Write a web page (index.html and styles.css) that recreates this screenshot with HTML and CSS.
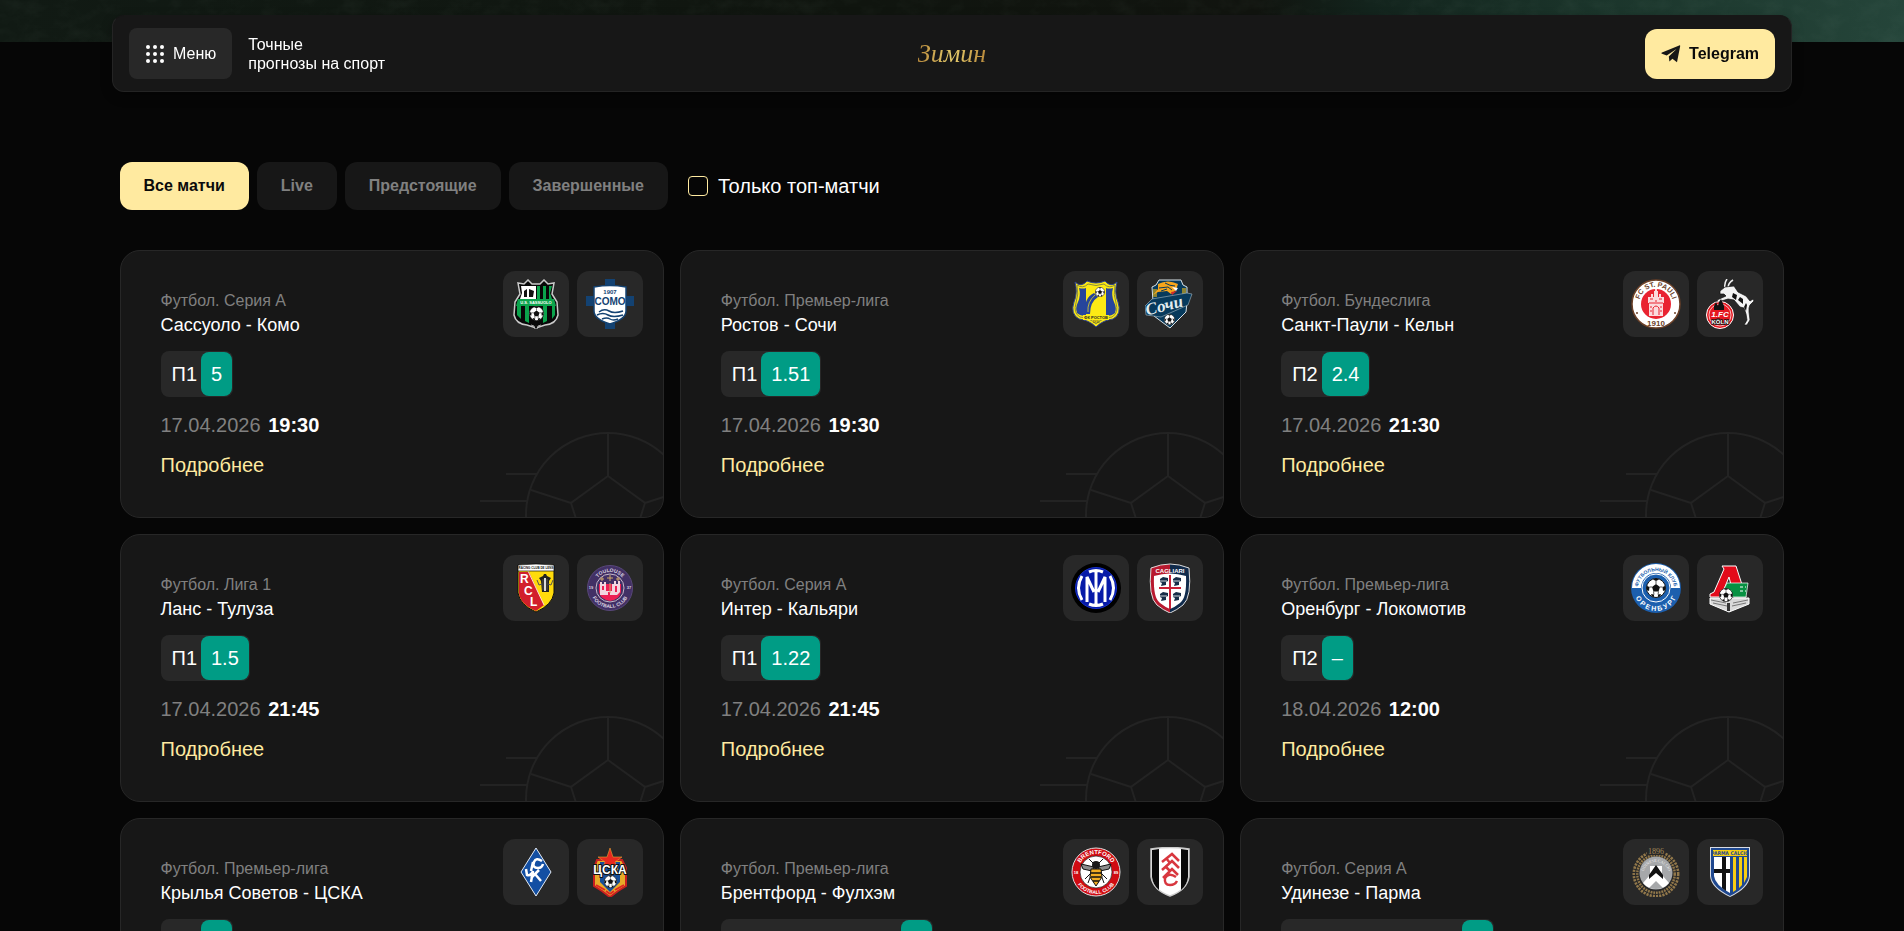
FILE: index.html
```html
<!DOCTYPE html>
<html lang="ru">
<head>
    <meta charset="UTF-8">
    <meta name="viewport" content="width=device-width, initial-scale=1.0">
    <title>Зимин - точные прогнозы на спорт</title>
    <link rel="stylesheet" href="styles.css">
</head>
<body>
    <svg class="sprite" aria-hidden="true">
        <symbol id="bg-ball" viewBox="0 0 184 86">
            <g fill="none" stroke="#232323" stroke-width="2">
                <circle cx="128" cy="83" r="82"/>
                <path d="M128 1v43l37 27-14 44h-46L91 71l37-27M91 71L51 58M165 71l40-13M26 42h31M0 69h47"/>
            </g>
        </symbol>
        <symbol id="ball" viewBox="0 0 20 20">
            <circle cx="10" cy="10" r="9.5" fill="#fff" stroke="#111"/>
            <path fill="#111" d="M10 6l4 3-1.500 4.500h-5L6 9zM7 1.500L10 3l3-1.500L10 .5zM1 8l2.500 1L3 13 1 12zM19 8l-2.500 1 .5 4 2-1zM5 16l3 .5 0 2.500-2-.5zM15 16l-3 .5 0 2.500 2-.5z"/>
            <path fill="none" stroke="#111" stroke-width=".7" d="M10 3v3M3.500 9H6M16.500 9H14M8 16.500l-.5-3M12 16.500l.5-3"/>
        </symbol>
    </svg>

    <div class="hero">
        <svg class="hero-dust" aria-hidden="true">
            <filter id="dust">
                <feTurbulence type="fractalNoise" baseFrequency=".05 .07" numOctaves="4" seed="8"/>
                <feColorMatrix values="0 0 0 0 .45  0 0 0 0 .6  0 0 0 0 .5  1.200 0 0 0 -.5"/>
            </filter>
            <rect width="100%" height="100%" filter="url(#dust)"/>
        </svg>
    </div>

    <header class="header">
        <button class="menu-btn" type="button">
            <svg width="20" height="20" viewBox="0 0 20 20" fill="#fff" aria-hidden="true">
                <circle cx="3" cy="3" r="2"/><circle cx="10" cy="3" r="2"/><circle cx="17" cy="3" r="2"/>
                <circle cx="3" cy="10" r="2"/><circle cx="10" cy="10" r="2"/><circle cx="17" cy="10" r="2"/>
                <circle cx="3" cy="17" r="2"/><circle cx="10" cy="17" r="2"/><circle cx="17" cy="17" r="2"/>
            </svg>
            Меню
        </button>
        <p class="slogan">Точные<br>прогнозы на спорт</p>
        <a class="logo" href="#">Зимин</a>
        <a class="tg-btn" href="#">
            <svg width="20" height="18" viewBox="0 0 20 18" fill="#171717" aria-hidden="true">
                <path d="M19.200 1L16 17.200l-4.600-3.400-3 2.600-.6-4.800L15.500 4 5.700 10.500 1 8.800c-.8-.4-.8-1 0-1.400L18.200.4c.6-.2 1.100 0 1 .6z"/>
            </svg>
            Telegram
        </a>
    </header>

    <main class="container">
        <div class="filters">
            <button class="filter active" type="button">Все матчи</button>
            <button class="filter" type="button">Live</button>
            <button class="filter" type="button">Предстоящие</button>
            <button class="filter" type="button">Завершенные</button>
            <label class="top-only" for="topOnly">
                <input type="checkbox" id="topOnly">
                Только топ-матчи
            </label>
        </div>

        <div class="matches">
            <article class="match">
                <svg class="match-bg" aria-hidden="true"><use href="#bg-ball"/></svg>
                <div class="teams">
                    <div class="team">
                        <svg viewBox="0 0 50 50">
                            <path d="M7 4l6 1 4-4 4 4h8l4-4 4 4 6-1-2 11 5 8 1 13q-2 9-13 10l-9 3-9-3Q5 45 3 36l1-13 5-8z" fill="#080808" stroke="#c9c9c9" stroke-width="1.500"/>
                            <path d="M10 7h15v13H9l2-6z" fill="#fff"/>
                            <path d="M26 7h3v13h-3zM32 7h3v13h-3zM38 7h3l-2 7 2 6h-3zM6 27h4v13l-4-4zM14 27h4v17l-4-2zM32 27h4v15l-4 2zM41 27h3v9l-3 4z" fill="#0ba44c"/>
                            <path d="M13 18v-6l3-2v8zM18 18v-8l5 2-1 6z" fill="#111"/>
                            <path d="M7 20h36l2 7H5z" fill="#0ba44c"/>
                            <text x="25" y="25" font-size="4" font-weight="bold" fill="#fff" text-anchor="middle">U.S. SASSUOLO</text>
                            <use href="#ball" x="18" y="27" width="15" height="15"/>
                            <path d="M20 46l3 1 1 3 2 0 1-3 3-1" fill="#111" stroke="#ccc" stroke-width=".8"/>
                        </svg>
                    </div>
                    <div class="team">
                        <svg viewBox="0 0 50 50">
                            <path d="M20 0h10v50H20zM1 17h48v10H1z" fill="#134272"/>
                            <path d="M9 8q16-3 32 0v24q0 8-16 13Q9 40 9 32z" fill="#fff" stroke="#134272" stroke-width="1.500"/>
                            <text x="25" y="15" font-size="6" font-weight="bold" fill="#134272" text-anchor="middle">1907</text>
                            <text x="25" y="26" font-size="10" font-weight="bold" fill="#134272" text-anchor="middle">COMO</text>
                            <path d="M14 33q5-4 10-1t14 0M12 36q6-3 11 0t15 0M17 40q5-2 8 0t8 0" fill="none" stroke="#134272" stroke-width="1.500"/>
                        </svg>
                    </div>
                </div>
                <p class="league">Футбол. Серия А</p>
                <h2 class="title">Сассуоло - Комо</h2>
                <div class="bet"><span>П1</span><b>5</b></div>
                <p class="date">17.04.2026 <b>19:30</b></p>
                <a class="more" href="#">Подробнее</a>
            </article>

            <article class="match">
                <svg class="match-bg" aria-hidden="true"><use href="#bg-ball"/></svg>
                <div class="teams">
                    <div class="team">
                        <svg viewBox="0 0 50 50">
                            <path d="M4 3q6 6 12-1 9 4 18 0 6 7 12 1-3 11 1 20 4 12-5 17-10 1-17 8-7-7-17-8-9-5-5-17Q7 14 4 3z" fill="#fdea14" stroke="#2f4592"/>
                            <path d="M6 6q6 4 11-1 8 3 16 0 5 5 11 1-2 10 1 18 3 10-4 14-10 1-16 7-6-6-16-7-7-4-4-14Q8 15 6 6z" fill="none" stroke="#8b8d3c"/>
                            <path d="M8 9q4 1 7 0v28q-6 0-9-3-2-5 1-11 3-7 1-14zM42 9q-4 1-7 0v28q6 0 9-3 2-5-1-11-3-7-1-14z" fill="#27459b"/>
                            <path d="M15 35Q12 19 23 14l4 4q-8 5-8 17z" fill="#27459b"/>
                            <path d="M17 33q-1-10 7-17" fill="none" stroke="#fdea14" stroke-width=".7"/>
                            <use href="#ball" x="24" y="8" width="10" height="10"/>
                            <path d="M12 36h26v5H12z" fill="#fdea14"/>
                            <text x="25" y="40" font-size="4" font-weight="bold" fill="#222" text-anchor="middle">ФК РОСТОВ</text>
                            <text x="25" y="44" font-size="3" fill="#222" text-anchor="middle">1930</text>
                        </svg>
                    </div>
                    <div class="team">
                        <svg viewBox="0 0 50 50">
                            <path d="M7 8l4-2 3-5h22l2 5 4 2v15l-1 10-16 16L9 37z" fill="#073a5c" stroke="#d9e2e6"/>
                            <path d="M8 10h4v8H8zM37 9h4v12h-4z" fill="#8c8433"/>
                            <path d="M13 5q10-5 20 0l-2 6-5 4-4-3-9 1-5 3 5-6z" fill="#f6a51b"/>
                            <path d="M14 9l9-1 4 3M20 4q5 3 10 3M16 12l6-2" fill="none" stroke="#073a5c"/>
                            <path d="M27 8l6 1-2 3z" fill="#fff"/><path d="M26 13l6-1-5 4z" fill="#d42a28"/>
                            <path d="M1 36l-1-9 7-7 35-6 5 1-4 11-27 12z" fill="#073a5c" stroke="#a8bac4" stroke-width=".6"/>
                            <text x="2" y="36" font-size="17" font-style="italic" font-weight="bold" fill="#e2ecef" class="serif" transform="rotate(-14 4 36)">Сочи</text>
                            <use href="#ball" x="19" y="35" width="11" height="11"/>
                        </svg>
                    </div>
                </div>
                <p class="league">Футбол. Премьер-лига</p>
                <h2 class="title">Ростов - Сочи</h2>
                <div class="bet"><span>П1</span><b>1.51</b></div>
                <p class="date">17.04.2026 <b>19:30</b></p>
                <a class="more" href="#">Подробнее</a>
            </article>

            <article class="match">
                <svg class="match-bg" aria-hidden="true"><use href="#bg-ball"/></svg>
                <div class="teams">
                    <div class="team">
                        <svg viewBox="0 0 50 50">
                            <circle cx="25" cy="25" r="24" fill="#fff" stroke="#6c4128" stroke-width="1.500"/>
                            <circle cx="25" cy="25" r="15" fill="#e92331"/>
                            <path id="pauli" d="M8.500 29a17 17 0 1 1 33 0" fill="none"/>
                            <text font-size="7" font-weight="bold" fill="#6c4128" text-anchor="middle"><textPath href="#pauli" startOffset="50%">FC ST. PAULI</textPath></text>
                            <text x="25" y="47" font-size="8" font-weight="bold" fill="#6c4128" text-anchor="middle">1910</text>
                            <path d="M17 18h3v-3h2v3h1v-6h1v-2h2v2h1v6h1v-3h2v3h3v6h-1v13H18V24h-1z" fill="#fbdadd"/>
                            <path d="M22 36v-7q3-4 6 0v7M19 20h3M28 20h3M18 24h14M19 28h2M29 28h2M19 32h2M29 32h2M24 22h2" stroke="#e92331" fill="none"/>
                            <circle cx="6" cy="34" r="1" fill="#6c4128"/><circle cx="44" cy="34" r="1" fill="#6c4128"/>
                        </svg>
                    </div>
                    <div class="team">
                        <svg viewBox="0 0 50 50">
                            <path d="M20 9q-1-5 2-9M23 9q0-5 5-8" fill="none" stroke="#eee" stroke-width="1.500"/>
                            <path d="M20 8l-5 4 0 3 4 0 2 2-9 4 1 2 10-3 6 1 6 7 4 1 2 6 1 6-3 5 3 0 3-5-1-8 0-4 1-3 4-4-1-2-3 2-4-5-8-4-4-6z" fill="#f3f3f3" stroke="#111" stroke-width=".7"/>
                            <path d="M28 14l-1 4 4 3 1-5zM35 18l-2 3 5 4 0-5zM41 24l-2 4 2 4 1-6z" fill="#111"/>
                            <circle cx="15" cy="36" r="13.500" fill="#e51820" stroke="#fff"/>
                            <circle cx="15" cy="36" r="11" fill="none" stroke="#fff" stroke-width=".7"/>
                            <path d="M9 31v-4l2-4 2 4 1-4 2-3 3 7v4z" fill="#111"/>
                            <text x="15" y="38" font-size="8" font-weight="bold" font-style="italic" fill="#fff" text-anchor="middle">1.FC</text>
                            <text x="15" y="45" font-size="6" font-weight="bold" fill="#fff" stroke="#111" stroke-width="1.500" paint-order="stroke" text-anchor="middle">KÖLN</text>
                        </svg>
                    </div>
                </div>
                <p class="league">Футбол. Бундеслига</p>
                <h2 class="title">Санкт-Паули - Кельн</h2>
                <div class="bet"><span>П2</span><b>2.4</b></div>
                <p class="date">17.04.2026 <b>21:30</b></p>
                <a class="more" href="#">Подробнее</a>
            </article>

            <article class="match">
                <svg class="match-bg" aria-hidden="true"><use href="#bg-ball"/></svg>
                <div class="teams">
                    <div class="team">
                        <svg viewBox="0 0 50 50">
                            <path d="M7 2q18-2 36 0v28q-2 12-18 19Q9 42 7 30z" fill="#ffdb0b" stroke="#111"/>
                            <path d="M8 9h10l15 33-8 6Q9 41 8 30z" fill="#d21f2b"/>
                            <path d="M17 8l16 34" stroke="#fff" stroke-width=".8"/>
                            <path d="M7 2q18-2 36 0v6H7z" fill="#fff" stroke="#111" stroke-width=".7"/>
                            <text x="25" y="6" font-size="3" font-weight="bold" fill="#111" text-anchor="middle">RACING CLUB DE LENS</text>
                            <g font-size="12" font-weight="bold" fill="#fff"><text x="9" y="20">R</text><text x="13" y="32">C</text><text x="19" y="43">L</text></g>
                            <path d="M28 15l4-2 1-2 2 0 1 2 4 2-2 3 0 11H31l-1-11z" fill="#222"/>
                            <path d="M32 16v11M36 16v11M26 17l2 5 3-1M42 17l-2 5-3-1" fill="none" stroke="#555"/>
                            <path d="M33 15h2v13h-2z" fill="#ddd"/>
                        </svg>
                    </div>
                    <div class="team">
                        <svg viewBox="0 0 50 50">
                            <circle cx="25" cy="25" r="22.500" fill="#423065" stroke="#59487a"/>
                            <circle cx="25" cy="25" r="14" fill="#423065" stroke="#c5b9ca"/>
                            <path id="tlsTop" d="M9 25a16 16 0 0 1 32 0" fill="none"/>
                            <path id="tlsBot" d="M5 25a20 20 0 0 0 40 0" fill="none"/>
                            <g font-size="5" font-weight="bold" fill="#ddd5e2" text-anchor="middle">
                                <text><textPath href="#tlsTop" startOffset="50%">TOULOUSE</textPath></text>
                                <text><textPath href="#tlsBot" startOffset="50%">FOOTBALL CLUB</textPath></text>
                                <text x="6" y="26" font-size="4">19</text><text x="44" y="26" font-size="4">37</text>
                            </g>
                            <path d="M14 21h22v8q-2 8-11 9-9-1-11-9z" fill="#ec2054"/>
                            <path d="M15 21v-2h2v2h2v-2h2v9h6v-7h2v-3h2v3h2v-3h2v11l-3 3H15z" fill="#f3d5df"/>
                            <path d="M17 23h2v4h-2zM30 23h2v6h-2zM23 29h2v4h-2z" fill="#ec2054"/>
                            <path d="M17 14v4M15 16h4M25 12v6M22 15h6M33 14v4M31 16h4M25 20v10" stroke="#cda76a"/>
                        </svg>
                    </div>
                </div>
                <p class="league">Футбол. Лига 1</p>
                <h2 class="title">Ланс - Тулуза</h2>
                <div class="bet"><span>П1</span><b>1.5</b></div>
                <p class="date">17.04.2026 <b>21:45</b></p>
                <a class="more" href="#">Подробнее</a>
            </article>

            <article class="match">
                <svg class="match-bg" aria-hidden="true"><use href="#bg-ball"/></svg>
                <div class="teams">
                    <div class="team">
                        <svg viewBox="0 0 50 50">
                            <circle cx="25" cy="25" r="25" fill="#000"/>
                            <circle cx="25" cy="25" r="20.500" fill="#061aa8" stroke="#1730c8"/>
                            <g fill="none" stroke="#fff" stroke-width="3">
                                <path d="M18 9q7-3 14 0M18 41q7 3 14 0M25 9v32M16 39V14l7 15M34 39V14l-7 15M11 13q-7 12 0 24M39 13q7 12 0 24"/>
                            </g>
                        </svg>
                    </div>
                    <div class="team">
                        <svg viewBox="0 0 50 50">
                            <path d="M25 1q-9 0-19 4-3 29 6 37 6 5 13 8z" fill="#b8192f"/>
                            <path d="M25 1q9 0 19 4 3 29-6 37-6 5-13 8z" fill="#102b4c"/>
                            <path d="M25 1q-9 0-19 4-3 29 6 37 6 5 13 8 7-3 13-8 9-8 6-37-10-4-19-4z" fill="none" stroke="#ddd"/>
                            <path d="M9 13q16-5 32 0 1 22-6 27-5 4-10 6-5-2-10-6-7-5-6-27z" fill="#fff"/>
                            <path d="M25 12v34M14 25h22" stroke="#c81f36" stroke-width="2"/>
                            <text x="25" y="10" font-size="6" font-weight="bold" fill="#fff" text-anchor="middle">CAGLIARI</text>
                            <g fill="#172d48"><path id="moor" d="M15 16l3-2 5 1v3l-2 1v3l-5 1 1-3-2-1z"/><use href="#moor" x="13"/><use href="#moor" y="15"/><use href="#moor" x="13" y="15"/></g>
                            <path d="M15 18h7M28 18h7M15 33h7M28 33h7" stroke="#fff" stroke-width=".8"/>
                        </svg>
                    </div>
                </div>
                <p class="league">Футбол. Серия А</p>
                <h2 class="title">Интер - Кальяри</h2>
                <div class="bet"><span>П1</span><b>1.22</b></div>
                <p class="date">17.04.2026 <b>21:45</b></p>
                <a class="more" href="#">Подробнее</a>
            </article>

            <article class="match">
                <svg class="match-bg" aria-hidden="true"><use href="#bg-ball"/></svg>
                <div class="teams">
                    <div class="team">
                        <svg viewBox="0 0 50 50">
                            <circle cx="25" cy="25" r="25" fill="#1c5fae"/>
                            <path d="M1 25a24 24 0 0 1 48 0h-9a15 15 0 0 0-30 0z" fill="#fff"/>
                            <circle cx="25" cy="25" r="14" fill="#1c5fae" stroke="#fff"/>
                            <path id="orTop" d="M7 26a18 18 0 0 1 36 0" fill="none"/>
                            <path id="orBot" d="M3 26a22 22 0 0 0 44 0" fill="none"/>
                            <g font-weight="bold" text-anchor="middle">
                                <text font-size="5" fill="#1c5fae"><textPath href="#orTop" startOffset="50%">ФУТБОЛЬНЫЙ КЛУБ</textPath></text>
                                <text font-size="7" fill="#fff"><textPath href="#orBot" startOffset="50%">О Р Е Н Б У Р Г</textPath></text>
                            </g>
                            <use href="#ball" x="15" y="15" width="20" height="20"/>
                        </svg>
                    </div>
                    <div class="team">
                        <svg viewBox="0 0 50 50">
                            <path d="M5 35h39v6L24 49 5 41z" fill="#d9d9d9" stroke="#fff"/>
                            <path d="M6 37l15 3M8 40l14 3M43 37l-15 3M41 40l-14 3" stroke="#777"/>
                            <path d="M17 3h14l10 31H29L24 14 17 31v3H5v-3l4-2 10-23z" fill="#e30a1a" stroke="#fff"/>
                            <path d="M22 20h21l-2 14H17q4-4 2-8z" fill="#079142" stroke="#fff" stroke-width=".7"/>
                            <path d="M35 24h3M35 28h3M40 24h1M40 28h1" stroke="#fff"/>
                            <use href="#ball" x="14" y="25" width="14" height="14"/>
                            <path d="M22 40h3v8h-3z" fill="#333"/>
                        </svg>
                    </div>
                </div>
                <p class="league">Футбол. Премьер-лига</p>
                <h2 class="title">Оренбург - Локомотив</h2>
                <div class="bet"><span>П2</span><b>–</b></div>
                <p class="date">18.04.2026 <b>12:00</b></p>
                <a class="more" href="#">Подробнее</a>
            </article>

            <article class="match">
                <svg class="match-bg" aria-hidden="true"><use href="#bg-ball"/></svg>
                <div class="teams">
                    <div class="team">
                        <svg viewBox="0 0 50 50">
                            <path d="M25 1l15 24-15 24L10 25z" fill="#134fa3" stroke="#e4ebf4"/>
                            <path d="M31 14q-6-4-8 1-2 6 4 6 4 0 5-4M22 15l-2 9M15 22l1 6q4 1 6-4l-2 11M20 31l8-8M24 27l6 7" fill="none" stroke="#fff" stroke-width="2.500"/>
                        </svg>
                    </div>
                    <div class="team">
                        <svg viewBox="0 0 50 50">
                            <path d="M12 13l-3 8 0 18 8 5 8 6 8-6 8-5V21l-4-8z" fill="#e8aa28" stroke="#c91e20" stroke-width="2"/>
                            <path d="M15 15h20v20l-10 10-10-10z" fill="#174f99"/>
                            <path d="M25 1l3 9 9 0-7 5 3 8-8-5-8 5 3-8-7-5 9 0z" fill="#e9281f" stroke="#e9a330" stroke-width=".6"/>
                            <text x="25" y="27" font-size="12" font-weight="bold" fill="#fff" stroke="#111" stroke-width="2" paint-order="stroke" text-anchor="middle">ЦСКА</text>
                            <path d="M11 38l9 5M39 38l-9 5M25 47l-4-3M25 47l4-3" stroke="#df2622" stroke-width="2"/>
                            <use href="#ball" x="19" y="28" width="13" height="13"/>
                        </svg>
                    </div>
                </div>
                <p class="league">Футбол. Премьер-лига</p>
                <h2 class="title">Крылья Советов - ЦСКА</h2>
                <div class="bet"><span>П2</span><b>2</b></div>
                <p class="date">18.04.2026 <b>14:15</b></p>
                <a class="more" href="#">Подробнее</a>
            </article>

            <article class="match">
                <svg class="match-bg" aria-hidden="true"><use href="#bg-ball"/></svg>
                <div class="teams">
                    <div class="team">
                        <svg viewBox="0 0 50 50">
                            <circle cx="25" cy="25" r="24" fill="#d00b12" stroke="#ddd"/>
                            <circle cx="25" cy="25" r="16" fill="#fff" stroke="#222" stroke-width=".7"/>
                            <path id="brTop" d="M7 25a18 18 0 0 1 36 0" fill="none"/>
                            <path id="brBot" d="M3 25a22 22 0 0 0 44 0" fill="none"/>
                            <g font-weight="bold" fill="#fff" text-anchor="middle">
                                <text font-size="6"><textPath href="#brTop" startOffset="50%">BRENTFORD</textPath></text>
                                <text font-size="5"><textPath href="#brBot" startOffset="50%">FOOTBALL CLUB</textPath></text>
                                <text x="5" y="27" font-size="4">18</text><text x="45" y="27" font-size="4">89</text>
                            </g>
                            <path d="M23 20L10 17l2 5 9 2zM27 20l13-3-2 5-9 2z" fill="#8c8c8c" stroke="#111"/>
                            <path d="M21 25l-7 7M29 25l7 7M20 28l-3 8M30 28l3 8M22 16l-4-4M28 16l4-4" stroke="#111"/>
                            <ellipse cx="25" cy="18" rx="4" ry="4" fill="#191919"/>
                            <path d="M20 22h10l1 8-6 9-6-9z" fill="#f3ad22" stroke="#111"/>
                            <path d="M20 26h10M20 30h10M22 34h6" stroke="#111" stroke-width="1.500"/>
                        </svg>
                    </div>
                    <div class="team">
                        <svg viewBox="0 0 50 50">
                            <path d="M6 2q19-3 38 0v28q-2 13-19 19Q8 43 6 30z" fill="#fff" stroke="#ccc" stroke-width="1.500"/>
                            <path d="M7 3l7-1v41Q8 38 7 30zM43 3l-7-1v41q6-5 7-13z" fill="#0a0a0a"/>
                            <path d="M17 15l10-8 7 7M17 23l10-9 7 7M18 31l9-9 6 6M21 11l4 5M20 19l5 5M31 30q-7-5-11 1-1 7 5 7 5 0 7-4" fill="none" stroke="#d8373f" stroke-width="2.500"/>
                        </svg>
                    </div>
                </div>
                <p class="league">Футбол. Премьер-лига</p>
                <h2 class="title">Брентфорд - Фулхэм</h2>
                <div class="bet"><span>Тотал меньше 2.5</span><b>2</b></div>
                <p class="date">18.04.2026 <b>14:30</b></p>
                <a class="more" href="#">Подробнее</a>
            </article>

            <article class="match">
                <svg class="match-bg" aria-hidden="true"><use href="#bg-ball"/></svg>
                <div class="teams">
                    <div class="team">
                        <svg viewBox="0 0 50 50">
                            <circle cx="25" cy="27" r="20.500" fill="none" stroke="#92784a" stroke-width="6" stroke-dasharray="2 1"/>
                            <circle cx="25" cy="27" r="20.500" fill="none" stroke="#282828"/>
                            <path d="M16 0h18v8H16z" fill="#282828"/>
                            <circle cx="25" cy="26" r="16.500" fill="#a6a8aa"/>
                            <path d="M12 36l7-8v-9h12v9l7 8q-5 6-13 6t-13-6z" fill="#fff"/>
                            <path d="M18 28l7-10 7 10v4l-7-6-7 6z" fill="#111"/>
                            <path d="M25 34l7 7q-7 2-14 0z" fill="#a6a8aa"/>
                            <text x="25" y="7" font-size="8" class="serif" fill="#a58a58" text-anchor="middle">1896</text>
                            <path id="udi" d="M12 28a13 13 0 1 1 26 0" fill="none"/>
                            <text font-size="4" class="serif" fill="#eee" text-anchor="middle"><textPath href="#udi" startOffset="50%">UDINESE CALCIO</textPath></text>
                        </svg>
                    </div>
                    <div class="team">
                        <svg viewBox="0 0 50 50">
                            <path d="M5 0h40v29q-1 12-20 21Q6 41 5 29z" fill="#d8dce4"/>
                            <path d="M6 1h38v28q-1 11-19 20Q7 40 6 29z" fill="#1f488f"/>
                            <path d="M9 10h16v36Q10 38 9 29z" fill="#fff"/>
                            <path d="M17 10h4v34l-4-3zM9 22h16v4H9z" fill="#111"/>
                            <path d="M28 10h3v33l-3 2zM34 10h3v28l-3 3zM39 10h3v20l-3 6zM8 3h34v6H8z" fill="#f6ce13"/>
                            <text x="25" y="8" font-size="5" font-weight="bold" fill="#1f488f" class="condensed" text-anchor="middle">PARMA CALCIO</text>
                        </svg>
                    </div>
                </div>
                <p class="league">Футбол. Серия А</p>
                <h2 class="title">Удинезе - Парма</h2>
                <div class="bet"><span>Тотал меньше 2.5</span><b>2</b></div>
                <p class="date">18.04.2026 <b>16:00</b></p>
                <a class="more" href="#">Подробнее</a>
            </article>
        </div>
    </main>
</body>
</html>
```

FILE: styles.css
```css
* {
    box-sizing: border-box;
}
body {
    margin: 0;
    background-color: #060606;
    color: white;
    font-family: "Liberation Sans", Arial, sans-serif;
    font-size: 16px;
    line-height: 20px;
}
p, h2 {
    margin: 0;
}
a {
    text-decoration: none;
}
button {
    border: none;
    font-family: inherit;
    cursor: pointer;
}
.sprite {
    position: absolute;
    width: 0;
    height: 0;
}
.hero {
    height: 42px;
    background: linear-gradient(90deg, #111a14 0%, #10150f 45%, #11140f 66%, #13241d 72%, #1b352b 84%, #25453a 100%);
}
.hero-dust {
    display: block;
    width: 100%;
    height: 100%;
    opacity: 0.07;
}
.header {
    position: fixed;
    top: 15px;
    left: 0;
    right: 0;
    width: calc(100% - 32px);
    max-width: 1680px;
    margin: 0 auto;
    padding: 12px 16px;
    display: flex;
    align-items: center;
    gap: 16px;
    background-color: #171717;
    border: 1px solid #242424;
    border-top-color: #171717;
    border-radius: 12px;
    box-shadow: 0 4px 12px rgba(0, 0, 0, 0.3);
    z-index: 10;
}
.menu-btn {
    display: flex;
    align-items: center;
    gap: 8px;
    height: 51px;
    padding: 0 16px;
    border-radius: 8px;
    background-color: #282828;
    color: white;
    font-size: 16px;
}
.slogan {
    line-height: 19px;
}
.logo {
    position: absolute;
    left: 50%;
    transform: translateX(-50%);
    font-family: "Liberation Serif", serif;
    font-style: italic;
    font-size: 26px;
    line-height: 40px;
    color: #cda349;
    background: linear-gradient(90deg, #b98a3c, #e6cc6c, #b98a3c);
    background-clip: text;
    -webkit-text-fill-color: transparent;
}
.tg-btn {
    display: flex;
    align-items: center;
    gap: 8px;
    height: 50px;
    margin-left: auto;
    padding: 0 16px;
    border-radius: 12px;
    background-color: #ffeaa0;
    color: #0b0b0b;
    font-weight: bold;
}
.container {
    max-width: 1697px;
    margin: 0 auto;
    padding: 120px 16px 40px;
}
.filters {
    display: flex;
    align-items: center;
    flex-wrap: wrap;
    gap: 8px;
    margin-bottom: 40px;
}
.filter {
    height: 48px;
    padding: 0 24px;
    border-radius: 12px;
    background-color: #171717;
    color: #808080;
    font-size: 16px;
    font-weight: bold;
}
.filter.active {
    background-color: #ffeaa0;
    color: #0b0b0b;
}
.top-only {
    display: flex;
    align-items: center;
    gap: 10px;
    margin-left: 12px;
    font-size: 20px;
    cursor: pointer;
}
.top-only input {
    appearance: none;
    width: 20px;
    height: 20px;
    margin: 0;
    border: 1px solid #ffeaa0;
    border-radius: 4px;
}
.top-only input:checked {
    background-color: #ffeaa0;
}
.matches {
    display: grid;
    grid-template-columns: repeat(auto-fit, minmax(420px, 1fr));
    gap: 16px;
}
.match {
    position: relative;
    overflow: hidden;
    padding: 40px;
    background-color: #171717;
    border: 1px solid #272727;
    border-radius: 20px;
}
.match-bg {
    position: absolute;
    right: -1px;
    bottom: -1px;
    width: 184px;
    height: 86px;
}
.teams {
    position: absolute;
    top: 20px;
    right: 20px;
    display: flex;
    gap: 8px;
}
.team {
    width: 66px;
    height: 66px;
    padding: 8px;
    border-radius: 12px;
    background-color: #282828;
}
.team svg {
    display: block;
    width: 50px;
    height: 50px;
}
.condensed {
    font-family: "DejaVu Sans Condensed", "Liberation Sans", sans-serif;
}
.serif {
    font-family: "Liberation Serif", serif;
}
.league {
    color: #808080;
}
.title {
    font-size: 18px;
    font-weight: normal;
    line-height: 28px;
}
.bet {
    display: flex;
    width: fit-content;
    height: 46px;
    margin: 12px 0 16px;
    padding: 1px 1px 1px 11px;
    border-radius: 8px;
    background-color: #282828;
    font-size: 20px;
    line-height: 44px;
}
.bet span {
    padding-right: 4px;
}
.bet b {
    padding: 0 10px;
    border-radius: 8px;
    background-color: #009c85;
    font-weight: normal;
}
.date {
    margin-bottom: 16px;
    color: #808080;
    font-size: 20px;
    line-height: 24px;
}
.date b {
    margin-left: 2px;
    color: white;
}
.more {
    display: block;
    width: fit-content;
    color: #ffeaa0;
    font-size: 20px;
    line-height: 24px;
}
```
